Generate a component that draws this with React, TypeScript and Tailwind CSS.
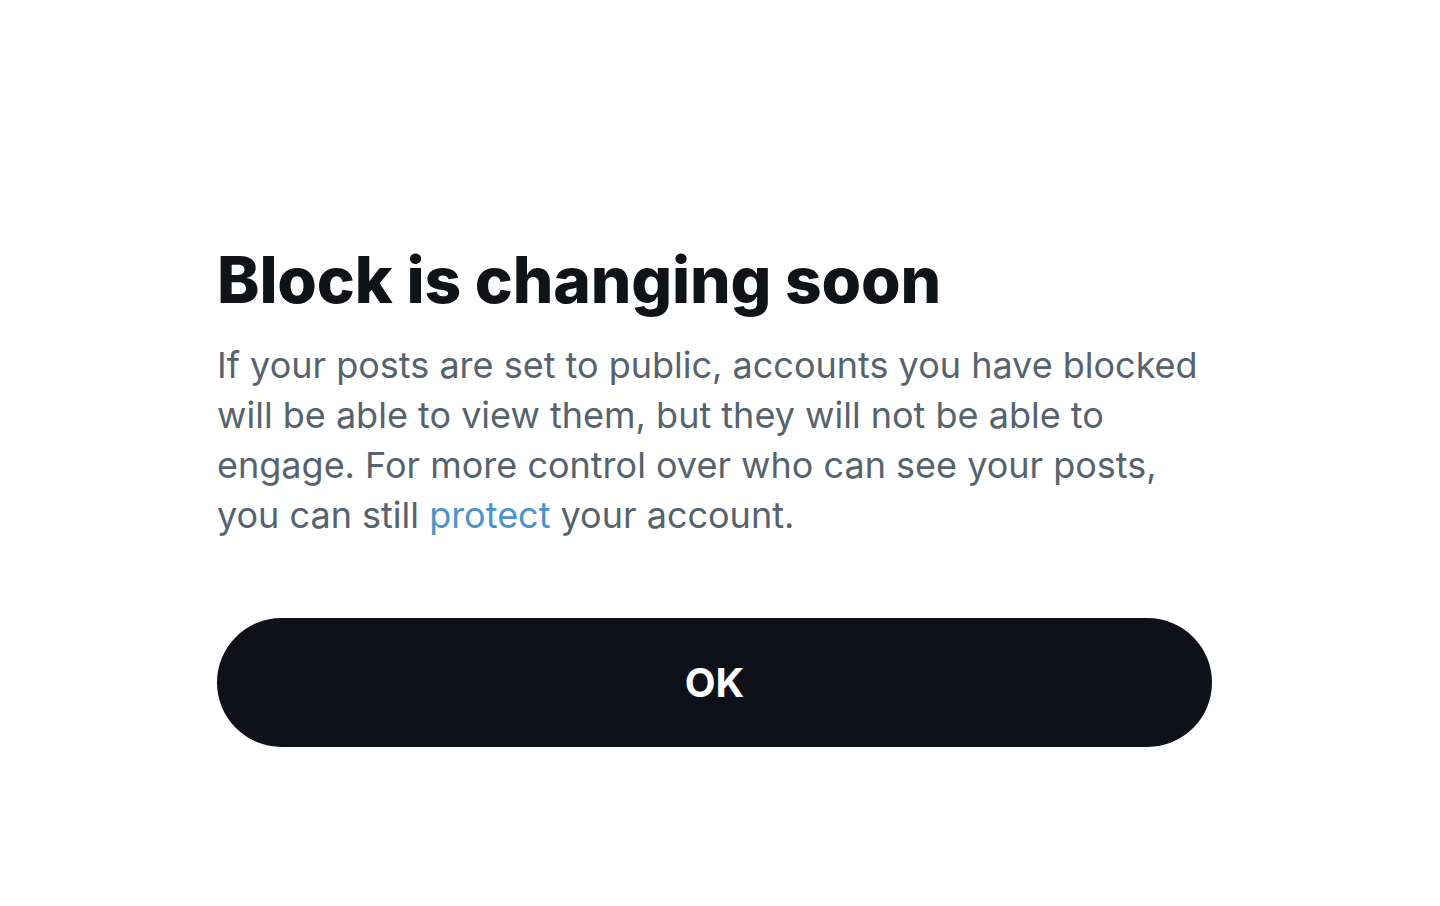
import React from 'react';

const App: React.FC = () => {
  return (
    <div
      className="w-[1440px] h-[906px] bg-white overflow-hidden"
      style={{ fontFamily: 'Inter, "Noto Sans", sans-serif' }}
    >
      <div className="pl-[217px] pt-[238px] w-[1211px]">
        <h1 className="text-[64px] leading-[84px] font-extrabold text-[#0f1419] tracking-[-0.15px]">
          Block is changing soon
        </h1>
        <p className="mt-[18px] text-[36px] leading-[50px] text-[#56636e]">
          If your posts are set to public, accounts you have blocked
          <br />
          will be able to view them, but they will not be able to
          <br />
          engage. For more control over who can see your posts,
          <br />
          you can still <span className="text-[#4a93cc]">protect</span> your account.
        </p>
        <button className="mt-[78px] w-[995px] h-[129px] rounded-full bg-[#0f111a] text-white text-[40px] font-bold flex items-center justify-center">
          OK
        </button>
      </div>
    </div>
  );
};

export default App;
